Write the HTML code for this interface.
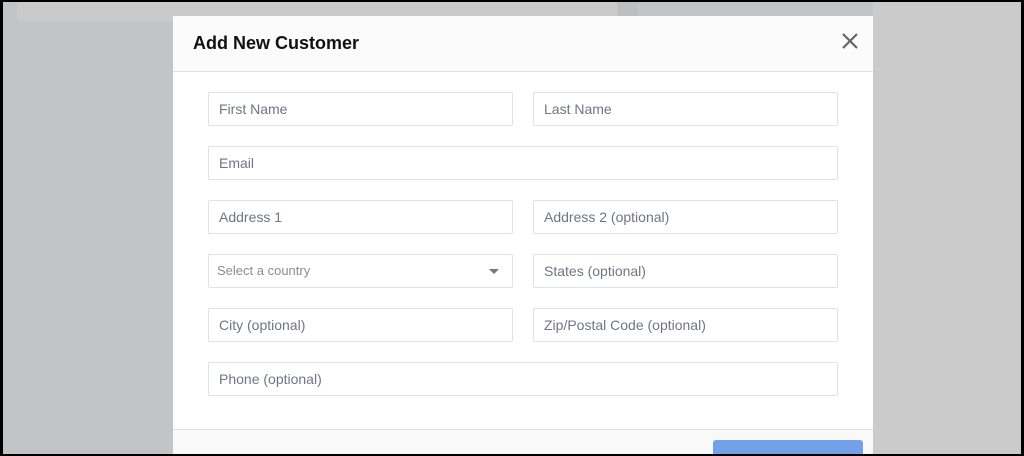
<!DOCTYPE html>
<html><head><style>
*{margin:0;padding:0;box-sizing:border-box}
html,body{width:1024px;height:456px;overflow:hidden}
body{background:#000;position:relative;font-family:"Liberation Sans",sans-serif}
.bg{position:absolute;left:3px;top:2px;right:3px;bottom:2px;background:#c3c4c6;overflow:hidden}
.rt{position:absolute;left:870px;top:0;right:0;bottom:0;background:#cbcbcb}
.tp{position:absolute;left:14px;top:0;width:600px;height:19px;background:#cacaca;border-radius:0 0 3px 3px}
.tp2{position:absolute;left:615px;top:0;width:20px;height:14px;background:#bdbec0}
.modal{position:absolute;left:173px;top:16px;width:700px;height:438px;background:#fff;overflow:hidden}
.hd{height:56px;background:#fbfbfb;border-bottom:1px solid #e2e2e2;position:relative}
.hd h1{position:absolute;left:20px;top:17px;font-size:18px;font-weight:bold;color:#111}
.x{position:absolute;left:668px;top:16px}
.in{position:absolute;height:34px;border:1px solid #dfe3e8;border-radius:2px;font-size:14px;color:#707585;padding:8px 10px}
.ft{position:absolute;left:0;top:413px;width:700px;height:40px;background:#f9f9f9;border-top:1px solid #e2e2e2}
.btn{position:absolute;left:540px;top:424px;width:150px;height:30px;background:#74a0ea;border-radius:3px}
</style></head><body>
<div class="bg"><div class="tp"></div><div class="tp2"></div><div class="rt"></div></div>
<div class="modal">
<div class="hd"><h1>Add New Customer</h1>
<svg class="x" width="18" height="18" viewBox="0 0 18 18"><path d="M2 2L16 16M16 2L2 16" stroke="#666" stroke-width="2.2"/></svg></div>
<div class="in" style="left:35px;top:76px;width:305px">First Name</div>
<div class="in" style="left:360px;top:76px;width:305px">Last Name</div>
<div class="in" style="left:35px;top:130px;width:630px">Email</div>
<div class="in" style="left:35px;top:184px;width:305px">Address 1</div>
<div class="in" style="left:360px;top:184px;width:305px">Address 2 (optional)</div>
<div class="in" style="left:35px;top:238px;width:305px;color:#8a8d93;font-size:13px;padding-left:8px">Select a country<svg style="position:absolute;right:13px;top:14px" width="10" height="6"><path d="M0 0H10L5 5Z" fill="#777"/></svg></div>
<div class="in" style="left:360px;top:238px;width:305px">States (optional)</div>
<div class="in" style="left:35px;top:292px;width:305px">City (optional)</div>
<div class="in" style="left:360px;top:292px;width:305px">Zip/Postal Code (optional)</div>
<div class="in" style="left:35px;top:346px;width:630px">Phone (optional)</div>
<div class="ft"></div><div class="btn"></div>
</div>
</body></html>
